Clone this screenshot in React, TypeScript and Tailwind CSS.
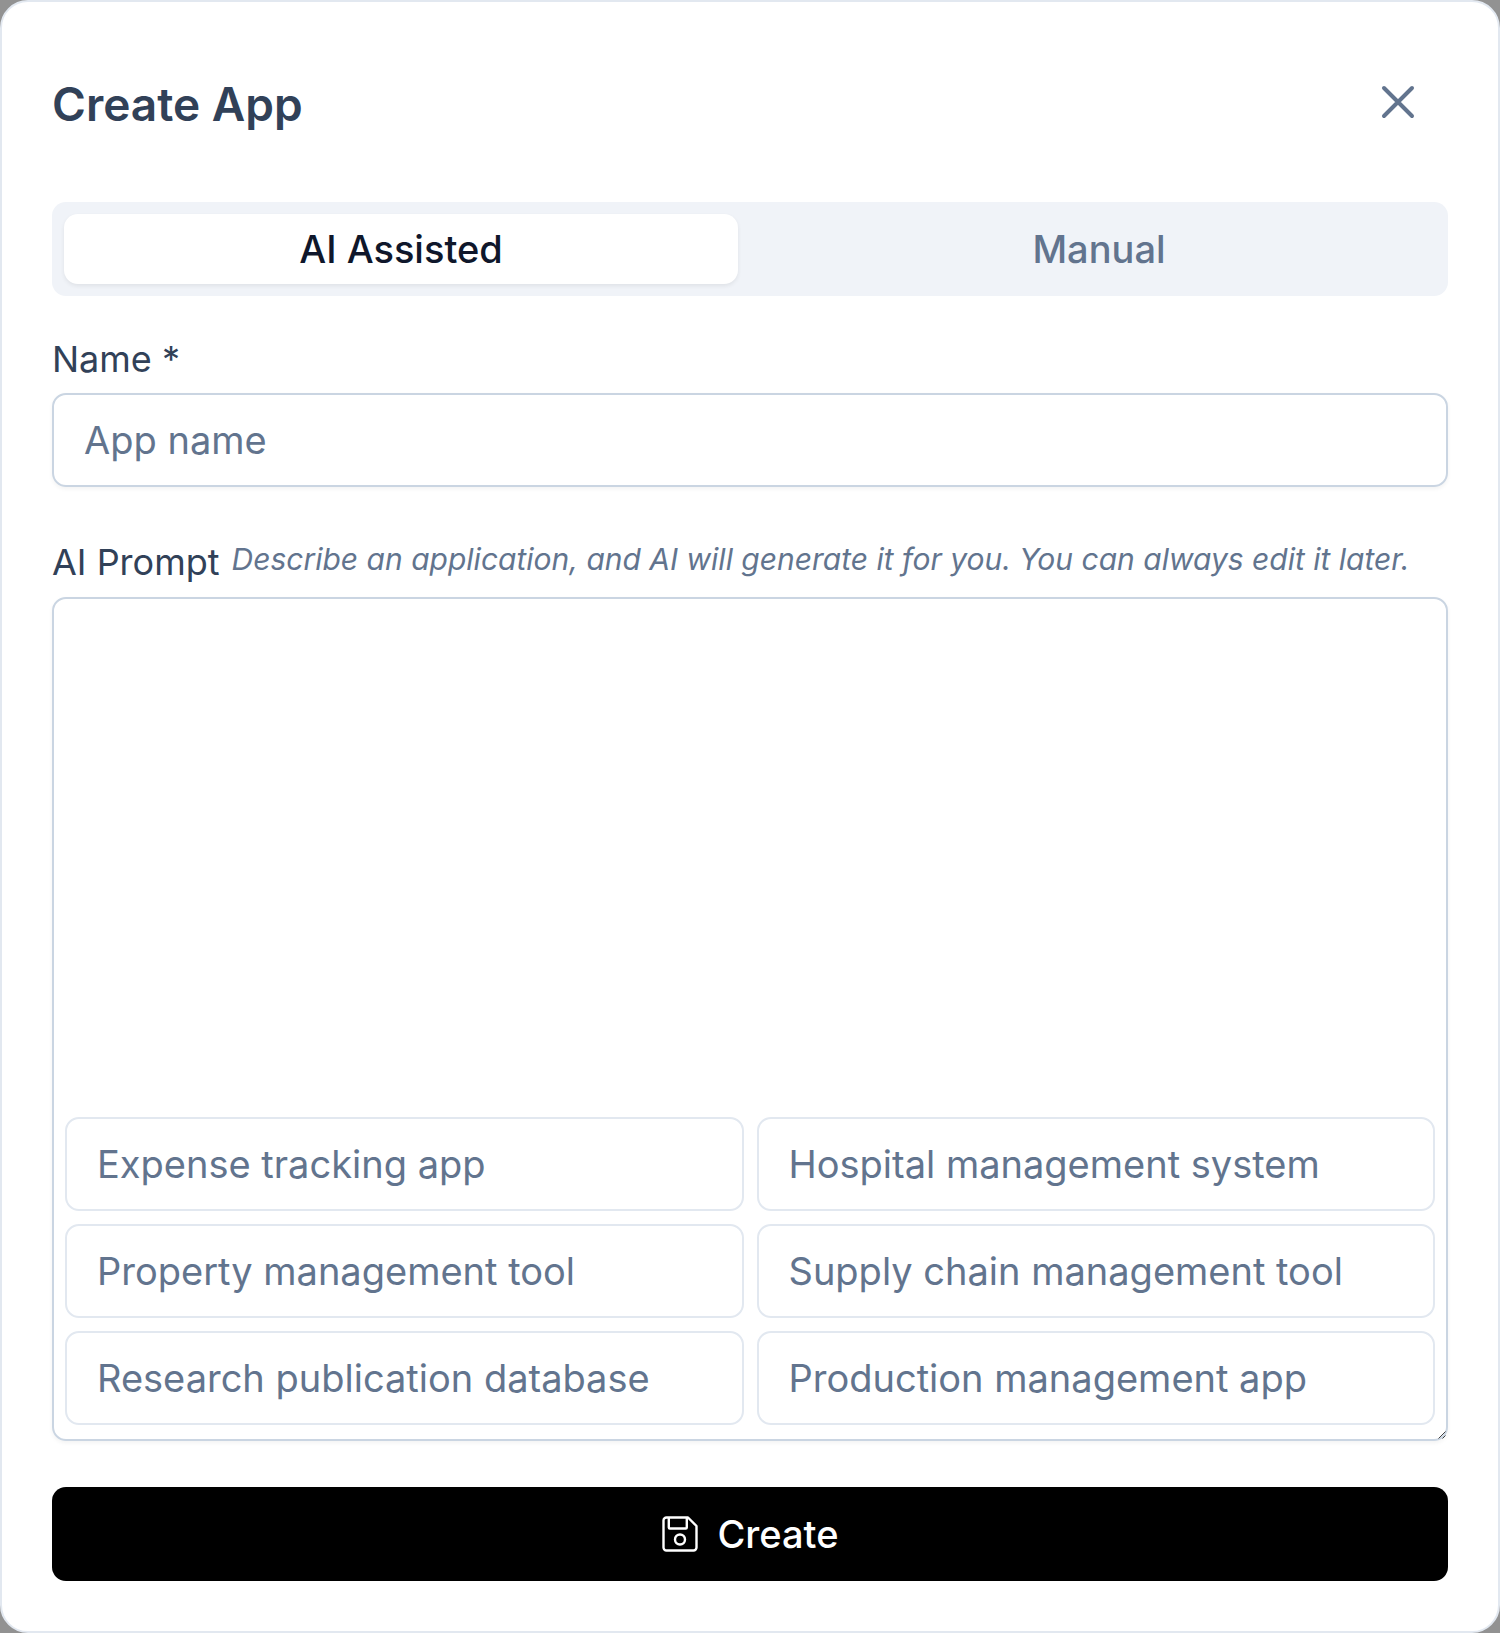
import { useState } from "react";

const SUGGESTIONS = [
  "Expense tracking app",
  "Hospital management system",
  "Property management tool",
  "Supply chain management tool",
  "Research publication database",
  "Production management app",
];

export default function App() {
  return (
    <div className="min-h-screen bg-[#929292] font-['Inter',sans-serif]">
      <CreateAppDialog />
    </div>
  );
}

function CreateAppDialog() {
  const [name, setName] = useState("");
  const [prompt, setPrompt] = useState("");

  return (
    <div
      role="dialog"
      aria-labelledby="dialog-title"
      className="flex min-h-screen flex-col rounded-[28px] border-2 border-slate-200 bg-white px-[50px] pt-[72px] pb-[50px]"
    >
      <header className="flex items-start justify-between pr-[22px]">
        <h2
          id="dialog-title"
          className="text-[46px] leading-[60px] font-semibold text-slate-700"
        >
          Create App
        </h2>
        <button
          type="button"
          aria-label="Close"
          className="flex size-14 items-center justify-center text-slate-500"
        >
          <CloseIcon />
        </button>
      </header>

      <Tabs />

      <form
        className="flex grow flex-col"
        onSubmit={(e) => e.preventDefault()}
      >
        <label
          htmlFor="name"
          className="mt-10 text-[36px] leading-[46px] text-slate-700"
        >
          Name *
        </label>
        <input
          id="name"
          name="name"
          type="text"
          placeholder="App name"
          value={name}
          onChange={(e) => setName(e.target.value)}
          className="mt-[11px] h-[94px] w-full rounded-[14px] border-2 border-slate-300 px-[30px] text-[38px] text-slate-700 shadow-[0_2px_4px_rgba(0,0,0,0.05)] outline-none placeholder:text-slate-500"
        />

        <div className="mt-[52px] flex items-start gap-3">
          <label
            htmlFor="prompt"
            className="text-[36px] leading-[46px] text-slate-700"
          >
            AI Prompt
          </label>
          <span className="text-[30px] leading-[40px] whitespace-nowrap text-slate-500 italic">
            Describe an application, and AI will generate it for you. You can
            always edit it later.
          </span>
        </div>
        <div className="relative mt-3 flex h-[844px] flex-col">
          <textarea
            id="prompt"
            name="prompt"
            value={prompt}
            onChange={(e) => setPrompt(e.target.value)}
            className="w-full grow resize-none rounded-[14px] border-2 border-slate-300 px-[30px] py-5 text-[38px] text-slate-700 shadow-[0_2px_4px_rgba(0,0,0,0.05)] outline-none"
          />
          <div className="absolute inset-x-[13px] bottom-4 grid grid-cols-2 gap-[13px]">
            {SUGGESTIONS.map((text) => (
              <button
                key={text}
                type="button"
                onClick={() => setPrompt(text)}
                className="h-[94px] rounded-[14px] border-2 border-slate-200 px-[30px] text-left text-[38px] text-slate-500"
              >
                {text}
              </button>
            ))}
          </div>
          <ResizeGrip />
        </div>

        <button
          type="submit"
          className="mt-[46px] flex h-[94px] w-full items-center justify-center gap-5 rounded-[14px] bg-black text-[38px] font-medium text-white"
        >
          <SaveIcon />
          Create
        </button>
      </form>
    </div>
  );
}

function Tabs() {
  const [active, setActive] = useState("AI Assisted");

  return (
    <div
      role="tablist"
      className="mt-[68px] grid h-[94px] grid-cols-2 gap-6 rounded-[14px] bg-[#f0f3f8] p-3"
    >
      {["AI Assisted", "Manual"].map((tab) => (
        <button
          key={tab}
          type="button"
          role="tab"
          aria-selected={active === tab}
          onClick={() => setActive(tab)}
          className={
            active === tab
              ? "rounded-[14px] bg-white text-[38px] font-medium text-slate-900 shadow-[0_2px_4px_rgba(0,0,0,0.07)]"
              : "rounded-[14px] text-[38px] font-medium text-slate-500"
          }
        >
          {tab}
        </button>
      ))}
    </div>
  );
}

function CloseIcon() {
  return (
    <svg
      viewBox="0 0 44 44"
      className="size-11"
      fill="none"
      stroke="currentColor"
      strokeWidth="4"
      strokeLinecap="round"
    >
      <path d="M8 8l28 28M36 8L8 36" />
    </svg>
  );
}

function SaveIcon() {
  return (
    <svg
      viewBox="0 0 36 36"
      className="size-9"
      fill="none"
      stroke="currentColor"
      strokeWidth="2.4"
      strokeLinejoin="round"
    >
      <path d="M4.500 1.500H26L34.500 10V31.500a3 3 0 0 1-3 3H4.500a3 3 0 0 1-3-3V4.500a3 3 0 0 1 3-3z" />
      <path d="M6.800 2v9.500a1 1 0 0 0 1 1h16a1 1 0 0 0 1-1V2" />
      <circle cx="18" cy="23.500" r="5" />
    </svg>
  );
}

function ResizeGrip() {
  return (
    <svg
      viewBox="0 0 8 8"
      className="pointer-events-none absolute right-[2px] bottom-[2px] size-2"
      stroke="#444"
      strokeWidth="1"
    >
      <path d="M0.500 7.500l7-7M4.500 7.500l3-3" />
    </svg>
  );
}
